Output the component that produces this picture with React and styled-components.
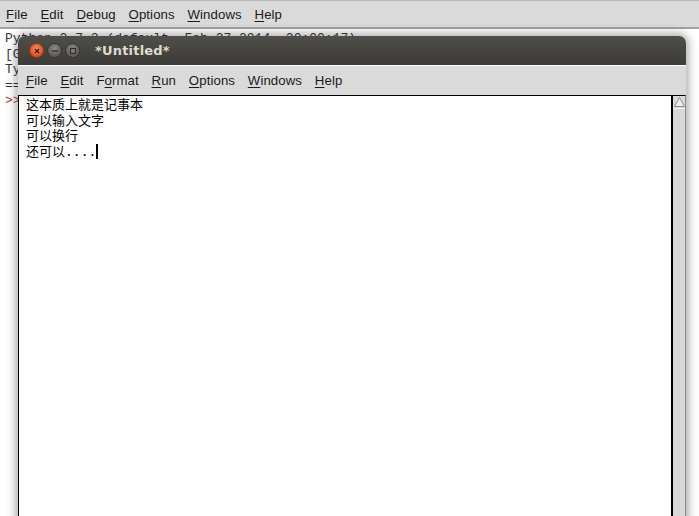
import React from "react";
import styled, { createGlobalStyle } from "styled-components";

const GlobalStyle = createGlobalStyle`
  html, body {
    margin: 0;
    padding: 0;
    background: #ffffff;
    overflow: hidden;
  }
`;

const Desktop = styled.div`
  position: relative;
  width: 699px;
  height: 516px;
  overflow: hidden;
  background: #ffffff;
  font-family: "Liberation Sans", "Noto Sans", sans-serif;
`;

const MenuBar = styled.div`
  display: flex;
  align-items: center;
  gap: 12.8px;
  height: ${(p) => p.height}px;
  padding-left: ${(p) => p.indent}px;
  background: #dadada;
  box-sizing: border-box;
  border-top: 1px solid ${(p) => p.topLine};
  border-bottom: ${(p) => (p.bottomLine ? `2px solid ${p.bottomLine}` : "none")};
  font-size: 13.2px;
  color: #1a1a1a;
`;

const MenuItem = styled.span`
  white-space: nowrap;
  letter-spacing: 0.1px;
`;

const Key = styled.span`
  text-decoration: underline;
  text-underline-offset: 2px;
`;

const ShellText = styled.pre`
  margin: 0;
  padding: 2px 0 0 5px;
  font-family: "Liberation Mono", "DejaVu Sans Mono", monospace;
  font-size: 13px;
  line-height: 15.5px;
  color: #3a3a3a;
`;

const Prompt = styled.span`
  color: #a83a2a;
`;

const EditorWindow = styled.div`
  position: absolute;
  left: 18px;
  top: 36px;
  width: 668px;
  height: 500px;
  display: flex;
  flex-direction: column;
  border-radius: 7px 7px 0 0;
  box-shadow: 0 0 9px 3px rgba(0, 0, 0, 0.3);
  background: #d6d6d6;
`;

const TitleBar = styled.div`
  height: 29px;
  flex: none;
  display: flex;
  align-items: center;
  padding-left: 11px;
  border-radius: 7px 7px 0 0;
  background: linear-gradient(#504e49, #3c3b37);
`;

const Controls = styled.div`
  display: flex;
  gap: 3px;
  margin-right: 15px;
`;

const CircleButton = styled.div`
  width: 15px;
  height: 15px;
  border-radius: 50%;
  box-sizing: border-box;
  border: 1px solid ${(p) => (p.close ? "#9a3317" : "#35342f")};
  background: ${(p) =>
    p.close
      ? "radial-gradient(circle at 50% 35%, #f6845c, #e0501f 70%)"
      : "radial-gradient(circle at 50% 35%, #8a8984, #5e5d58 70%)"};
  display: flex;
  align-items: center;
  justify-content: center;
`;

const Title = styled.div`
  font-family: "DejaVu Sans", "Noto Sans", sans-serif;
  font-weight: bold;
  font-size: 13px;
  color: #dfdbd2;
  letter-spacing: 0.2px;
`;

const EditorBody = styled.div`
  flex: 1;
  display: flex;
  min-height: 0;
`;

const TextArea = styled.div`
  flex: 1;
  position: relative;
  background: #ffffff;
  border-top: 1px solid #000;
  border-left: 1px solid #000;
  border-right: 2px solid #000;
  padding: 1px 0 0 7px;
  font-family: "DejaVu Sans Mono", "Noto Sans CJK SC", monospace;
  font-size: 13px;
  line-height: 15.5px;
  color: #000;
`;

const Line = styled.div`
  white-space: pre;
`;

const Caret = styled.span`
  display: inline-block;
  width: 2px;
  height: 15px;
  background: #000;
  vertical-align: -3px;
`;

const ScrollBar = styled.div`
  width: 12px;
  flex: none;
  background: #d9d9d9;
  border-right: 1px solid #8a8a8a;
  border-top: 1px solid #000;
`;

const ArrowButton = styled.div`
  height: 12px;
  border-bottom: 1px solid #f4f4f4;
  display: flex;
  justify-content: center;
  align-items: center;
`;

const Glyph = ({ kind }) => {
  if (kind === "close") {
    return (
      <svg width="8" height="8" viewBox="0 0 8 8">
        <path d="M2 2 L6 6 M6 2 L2 6" stroke="#3c1a0e" strokeWidth="1.2" />
      </svg>
    );
  }
  if (kind === "min") {
    return (
      <svg width="8" height="8" viewBox="0 0 8 8">
        <path d="M1 4 H7" stroke="#2e2d29" strokeWidth="1.3" />
      </svg>
    );
  }
  return (
    <svg width="8" height="8" viewBox="0 0 8 8">
      <rect x="1.5" y="1.5" width="5" height="5" fill="none" stroke="#2e2d29" strokeWidth="1.1" />
    </svg>
  );
};

const Menu = ({ items }) =>
  items.map(([first, rest, pre]) => (
    <MenuItem key={first + rest}>
      {pre}
      <Key>{first}</Key>
      {rest}
    </MenuItem>
  ));

const shellMenu = [
  ["F", "ile"],
  ["E", "dit"],
  ["D", "ebug"],
  ["O", "ptions"],
  ["W", "indows"],
  ["H", "elp"],
];

const editorMenu = [
  ["F", "ile"],
  ["E", "dit"],
  ["o", "rmat", "F"],
  ["R", "un"],
  ["O", "ptions"],
  ["W", "indows"],
  ["H", "elp"],
];

const lines = ["这本质上就是记事本", "可以输入文字", "可以换行"];

export default function App() {
  return (
    <Desktop>
      <GlobalStyle />
      <MenuBar height={29} indent={6} topLine="#b8b8b8" bottomLine="#a3a3a3">
        <Menu items={shellMenu} />
      </MenuBar>
      <ShellText>
        {"Python 2.7.3 (default, Feb 27 2014, 20:00:17)\n"}
        {"[GCC 4.6.3] on linux2\n"}
        {'Type "copyright", "credits" or "license()" for more information.\n'}
        {"==== No Subprocess ====\n"}
        <Prompt>{">>> "}</Prompt>
      </ShellText>

      <EditorWindow>
        <TitleBar>
          <Controls>
            <CircleButton close>
              <Glyph kind="close" />
            </CircleButton>
            <CircleButton>
              <Glyph kind="min" />
            </CircleButton>
            <CircleButton>
              <Glyph kind="max" />
            </CircleButton>
          </Controls>
          <Title>*Untitled*</Title>
        </TitleBar>
        <MenuBar height={30} indent={8} topLine="#ffffff">
          <Menu items={editorMenu} />
        </MenuBar>
        <EditorBody>
          <TextArea>
            {lines.map((l) => (
              <Line key={l}>{l}</Line>
            ))}
            <Line>
              还可以....
              <Caret />
            </Line>
          </TextArea>
          <ScrollBar>
            <ArrowButton>
              <svg width="11" height="10" viewBox="0 0 11 10">
                <path d="M5.5 0.5 L10.5 9.5 H0.5 Z" fill="#eeeeee" stroke="#8c8c8c" strokeWidth="1" />
              </svg>
            </ArrowButton>
          </ScrollBar>
        </EditorBody>
      </EditorWindow>
    </Desktop>
  );
}
